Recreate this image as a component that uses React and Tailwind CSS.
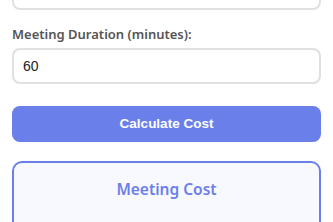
export default function App() {
  return (
    <div className="w-[333px] h-[222px] overflow-hidden bg-white px-[12px]">
      <div className="mb-[14px]">
        <input
          type="number"
          defaultValue=""
          className="block w-full h-[36px] -mt-[26px] rounded-[8px] border-2 border-[#e0e0e0] bg-white px-[9px] text-[14px] font-['Liberation_Sans',Arial,sans-serif] outline-none"
        />
      </div>
      <div className="mb-[22px]">
        <label className="mb-[4px] block text-[13px] leading-[20px] font-semibold text-[#555] font-['Noto_Sans','Open_Sans',sans-serif]">
          Meeting Duration (minutes):
        </label>
        <input
          type="text"
          defaultValue="60"
          className="block w-full h-[36px] rounded-[8px] border-2 border-[#e0e0e0] bg-white px-[9px] text-[14px] text-[#222] font-['Liberation_Sans',Arial,sans-serif] outline-none"
        />
      </div>
      <button className="block w-full h-[36px] rounded-[8px] bg-[#6b7fea] text-[13.5px] font-bold text-white font-['Liberation_Sans',Arial,sans-serif]">
        Calculate Cost
      </button>
      <div className="mt-[19px] h-[120px] rounded-[10px] border-2 border-[#6b7fea] bg-[#f8f9ff] pt-[14px] text-center">
        <h3 className="text-[15.5px] leading-[24px] font-semibold text-[#6b7fea] font-['Noto_Sans','Open_Sans',sans-serif]">
          Meeting Cost
        </h3>
      </div>
    </div>
  );
}
